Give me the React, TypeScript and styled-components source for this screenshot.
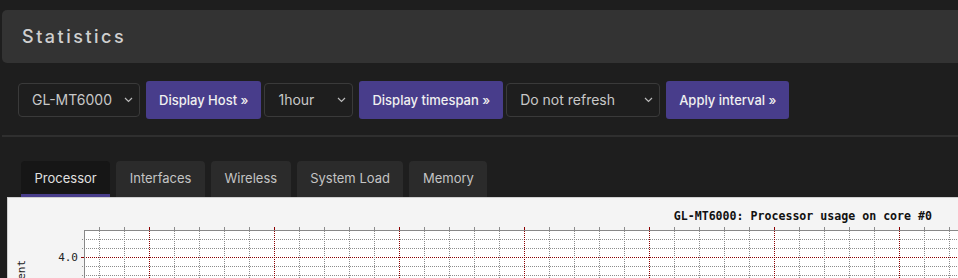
import React from 'react';
import styled, { createGlobalStyle } from 'styled-components';

const GlobalStyle = createGlobalStyle`
  html, body {
    margin: 0;
    background: #1e1e1e;
    overflow: hidden;
  }
  body {
    font-family: Inter, 'Noto Sans', sans-serif;
  }
`;

const accent = '#483d8b';

const hosts = ['GL-MT6000'];
const tabs = ['Processor', 'Interfaces', 'Wireless', 'System Load', 'Memory'];

export default function App() {
  return (
    <Page>
      <GlobalStyle />
      <HeaderBar>
        <Title>Statistics</Title>
      </HeaderBar>

      <Controls>
        <Select width={122}>
          {hosts[0]}
          <Chevron />
        </Select>
        <ActionButton>Display Host »</ActionButton>
        <Select width={89}>
          1hour
          <Chevron />
        </Select>
        <ActionButton>Display timespan »</ActionButton>
        <Select width={154}>
          Do not refresh
          <Chevron />
        </Select>
        <ActionButton>Apply interval »</ActionButton>
      </Controls>

      <Separator />

      <TabList>
        {tabs.map((tab, i) => (
          <Tab key={tab} active={i === 0}>
            {tab}
          </Tab>
        ))}
      </TabList>

      <ChartFrame>
        <ProcessorChart />
      </ChartFrame>
    </Page>
  );
}

const Chevron = () => (
  <svg width="9" height="6" viewBox="0 0 9 6">
    <path d="M1 1l3.5 3.5L8 1" fill="none" stroke="#bbb" strokeWidth="1.2" />
  </svg>
);

const ProcessorChart = () => {
  const left = 75;
  const top = 31;
  const right = 1000;
  const hLines = [40, 49, 58, 67, 76, 85];
  const vLines: number[] = [];
  for (let x = left + 15; x < right; x += 25) vLines.push(x);
  const isMajor = (x: number) => (x - (left + 65)) % 125 === 0;

  return (
    <svg width="1000" height="90" shapeRendering="crispEdges">
      <text
        x="923"
        y="21"
        textAnchor="end"
        fontFamily="'DejaVu Sans Mono', monospace"
        fontWeight="bold"
        fontSize="11.6"
        fill="#111"
      >
        GL-MT6000: Processor usage on core #0
      </text>
      <rect x={left} y={top} width={right - left} height="60" fill="#fff" />
      {hLines.map(y => (
        <line
          key={y}
          x1={left - 2}
          x2={right}
          y1={y + 0.5}
          y2={y + 0.5}
          stroke={y === 58 ? '#8b0000' : '#8c8c8c'}
          strokeDasharray="1 1"
        />
      ))}
      {vLines.map(x => (
        <line
          key={x}
          x1={x + 0.5}
          x2={x + 0.5}
          y1={top - 3}
          y2={100}
          stroke={isMajor(x) ? '#8b0000' : '#8c8c8c'}
          strokeDasharray="1 1"
        />
      ))}
      {vLines.map(x => (
        <line
          key={'t' + x}
          x1={x + 0.5}
          x2={x + 0.5}
          y1={top - 3}
          y2={top}
          stroke={isMajor(x) ? '#8b0000' : '#8c8c8c'}
        />
      ))}
      <line x1={left} x2={right} y1={top + 0.5} y2={top + 0.5} stroke="#888" strokeWidth="1.5" />
      <line x1={left + 0.5} x2={left + 0.5} y1={top} y2={100} stroke="#888" strokeWidth="1.5" />
      <line x1={left - 3} x2={left} y1={58.5} y2={58.5} stroke="#8b0000" />
      <text
        x="69"
        y="62"
        textAnchor="end"
        fontFamily="'DejaVu Sans Mono', monospace"
        fontSize="11"
        fill="#222"
      >
        4.0
      </text>
      <text
        transform="translate(16 61) rotate(-90)"
        textAnchor="end"
        fontFamily="'DejaVu Sans Mono', monospace"
        fontSize="11"
        fill="#222"
      >
        Percent
      </text>
    </svg>
  );
};

const Page = styled.div`
  width: 1000px;
  padding: 10px 0 0 2px;
  box-sizing: border-box;
`;

const HeaderBar = styled.div`
  display: flex;
  align-items: center;
  height: 53px;
  padding-left: 20px;
  background: #333333;
  border-radius: 5px;
`;

const Title = styled.h2`
  margin: 0;
  font-size: 18px;
  font-weight: 500;
  letter-spacing: 2.5px;
  color: #d0d0d0;
`;

const Controls = styled.div`
  display: flex;
  align-items: center;
  height: 39px;
  margin-top: 17px;
  padding-left: 16px;
`;

const Select = styled.div<{ width: number }>`
  display: flex;
  align-items: center;
  justify-content: space-between;
  box-sizing: border-box;
  width: ${p => p.width}px;
  height: 34px;
  margin-right: 6px;
  padding: 0 6px 0 13px;
  border: 1px solid #3a3a3a;
  border-radius: 4px;
  background: #1e1e1e;
  color: #c8c8c8;
  font-size: 14px;
`;

const ActionButton = styled.button`
  height: 38px;
  margin-right: 3px;
  padding: 0 13px;
  border: none;
  border-radius: 3px;
  background: ${accent};
  color: #f0f0f0;
  font-family: Inter, 'Noto Sans', sans-serif;
  font-size: 13px;
  font-weight: 500;
  cursor: pointer;
`;

const Separator = styled.div`
  height: 2px;
  margin-top: 16px;
  background: #2f2f2f;
`;

const TabList = styled.div`
  display: flex;
  gap: 6px;
  margin-top: 24px;
  padding-left: 19px;
`;

const Tab = styled.div<{ active?: boolean }>`
  display: flex;
  align-items: center;
  box-sizing: border-box;
  height: 36px;
  padding: 0 13.5px;
  border-radius: 4px 4px 0 0;
  background: ${p => (p.active ? '#161616' : '#2b2b2b')};
  border-bottom: 3px solid ${p => (p.active ? accent : 'transparent')};
  color: ${p => (p.active ? '#e0e0e0' : '#c4c4c4')};
  font-size: 13px;
`;

const ChartFrame = styled.div`
  margin-left: 5px;
  border: 1px solid #cfcfcf;
  border-right: none;
  border-bottom: none;
  padding: 1px 0 0 1px;
  background: #f4f4f4;
  height: 90px;
`;
